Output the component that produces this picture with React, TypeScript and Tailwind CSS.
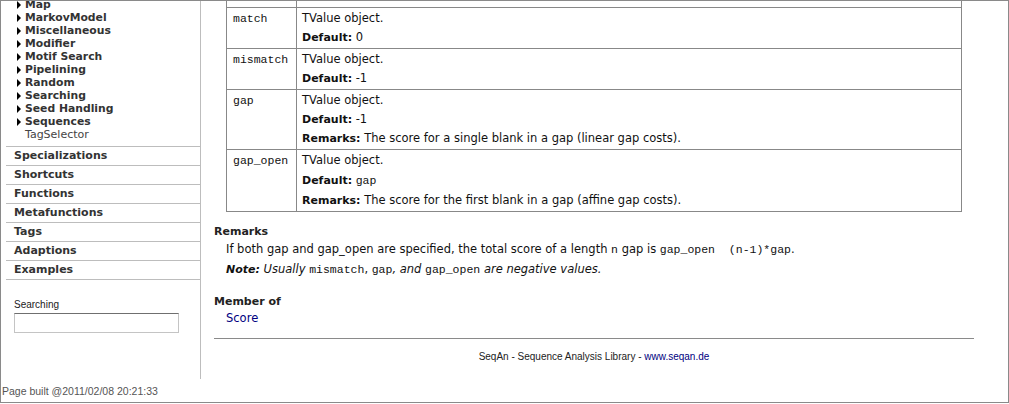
const tree = [
  "Map",
  "MarkovModel",
  "Miscellaneous",
  "Modifier",
  "Motif Search",
  "Pipelining",
  "Random",
  "Searching",
  "Seed Handling",
  "Sequences",
];

const sections = [
  "Specializations",
  "Shortcuts",
  "Functions",
  "Metafunctions",
  "Tags",
  "Adaptions",
  "Examples",
];

const verdana = "font-['DejaVu_Sans',Verdana,sans-serif]";
const tahoma = "font-['Liberation_Sans',Tahoma,sans-serif]";
const mono = "font-['Liberation_Mono',monospace] text-[11.5px] not-italic";

function Code({ children }: { children: React.ReactNode }) {
  return <span className={mono}>{children}</span>;
}

function Label({ children }: { children: React.ReactNode }) {
  return <span className="font-bold text-[11px]">{children}</span>;
}

const rows = [
  {
    name: "match",
    lines: [<>TValue object.</>, <><Label>Default:</Label> 0</>],
  },
  {
    name: "mismatch",
    lines: [<>TValue object.</>, <><Label>Default:</Label> -1</>],
  },
  {
    name: "gap",
    lines: [
      <>TValue object.</>,
      <><Label>Default:</Label> -1</>,
      <><Label>Remarks:</Label> The score for a single blank in a gap (linear gap costs).</>,
    ],
  },
  {
    name: "gap_open",
    lines: [
      <>TValue object.</>,
      <><Label>Default:</Label> <Code>gap</Code></>,
      <><Label>Remarks:</Label> The score for the first blank in a gap (affine gap costs).</>,
    ],
  },
];

export default function App() {
  return (
    <div className={`w-[1009px] h-[403px] border border-[#8a8a8a] bg-white flex overflow-hidden ${verdana}`}>
      <div className="w-[200px] shrink-0 flex flex-col">
        <div className="h-[378px] border-r border-[#bdbdbd] overflow-hidden">
          <div className="-mt-[3px] ml-[5px] pl-[11px] pb-[5px] border-b border-[#bdbdbd]">
            {tree.map((t) => (
              <div key={t} className="flex items-center h-[13px] leading-[13px] text-[10.8px] font-bold text-[#333]">
                <span className="w-0 h-0 border-y-[4px] border-y-transparent border-l-[4px] border-l-black mr-[4px]" />
                {t}
              </div>
            ))}
            <div className="h-[13px] leading-[13px] text-[11px] text-[#444] pl-[8px]">TagSelector</div>
          </div>
          {sections.map((s) => (
            <div
              key={s}
              className="ml-[5px] pl-[8px] h-[19px] leading-[18px] border-b border-[#bdbdbd] text-[11px] font-bold text-[#333]"
            >
              {s}
            </div>
          ))}
          <div className={`mt-[18px] ml-[13px] leading-[13px] text-[10px] text-[#222] ${tahoma}`}>Searching</div>
          <div className="mt-[2px] ml-[13px] w-[165px] h-[20px] border border-[#c4c4c4] border-t-[#6f6f6f] bg-white" />
        </div>
        <div className={`mt-[6px] pl-[1px] leading-[13px] text-[10.5px] text-[#555] ${tahoma}`}>
          Page built @2011/02/08 20:21:33
        </div>
      </div>

      <div className="flex-1 pl-[13px] pr-[34px] text-[11.5px] text-[#111]">
        <div className="mx-[12px] border-x border-[#888]">
          <div className="flex h-[7px] border-b border-[#888]">
            <div className="w-[70px] border-r border-[#888]" />
          </div>
          {rows.map((r) => (
            <div key={r.name} className="flex border-b border-[#888]">
              <div className="w-[70px] shrink-0 border-r border-[#888] pl-[6px] py-[1px] leading-[19px]">
                <Code>{r.name}</Code>
              </div>
              <div className="flex-1 pl-[5px] py-[1px]">
                {r.lines.map((l, i) => (
                  <div key={i} className={r.name === "gap_open" && i === 1 ? "leading-[21px]" : "leading-[19px]"}>
                    {l}
                  </div>
                ))}
              </div>
            </div>
          ))}
        </div>

        <div className="mt-[11px] leading-[17px] text-[11px] font-bold text-[#222]">Remarks</div>
        <div className="pl-[12px]">
          <div className="leading-[19px]">
            If both gap and gap_open are specified, the total score of a length <Code>n</Code> gap is{" "}
            <Code>gap_open&nbsp;&nbsp;(n-1)*gap</Code>.
          </div>
          <div className="mt-[1px] leading-[19px] italic">
            <span className="font-bold text-[11px]">Note:</span> Usually <Code>mismatch</Code>
            <span className="not-italic">, </span>
            <Code>gap</Code>, and <Code>gap_open</Code> are negative values.
          </div>
        </div>

        <div className="mt-[14px] leading-[17px] text-[11px] font-bold text-[#222]">Member of</div>
        <div className="pl-[12px] leading-[17px] text-[#000080]">Score</div>

        <div className="mt-[11px] border-t border-[#8a8a8a]" />
        <div className={`mt-[9px] text-center leading-[17px] text-[10px] text-[#222] ${tahoma}`}>
          SeqAn - Sequence Analysis Library - <span className="text-[#000080]">www.seqan.de</span>
        </div>
      </div>
    </div>
  );
}
